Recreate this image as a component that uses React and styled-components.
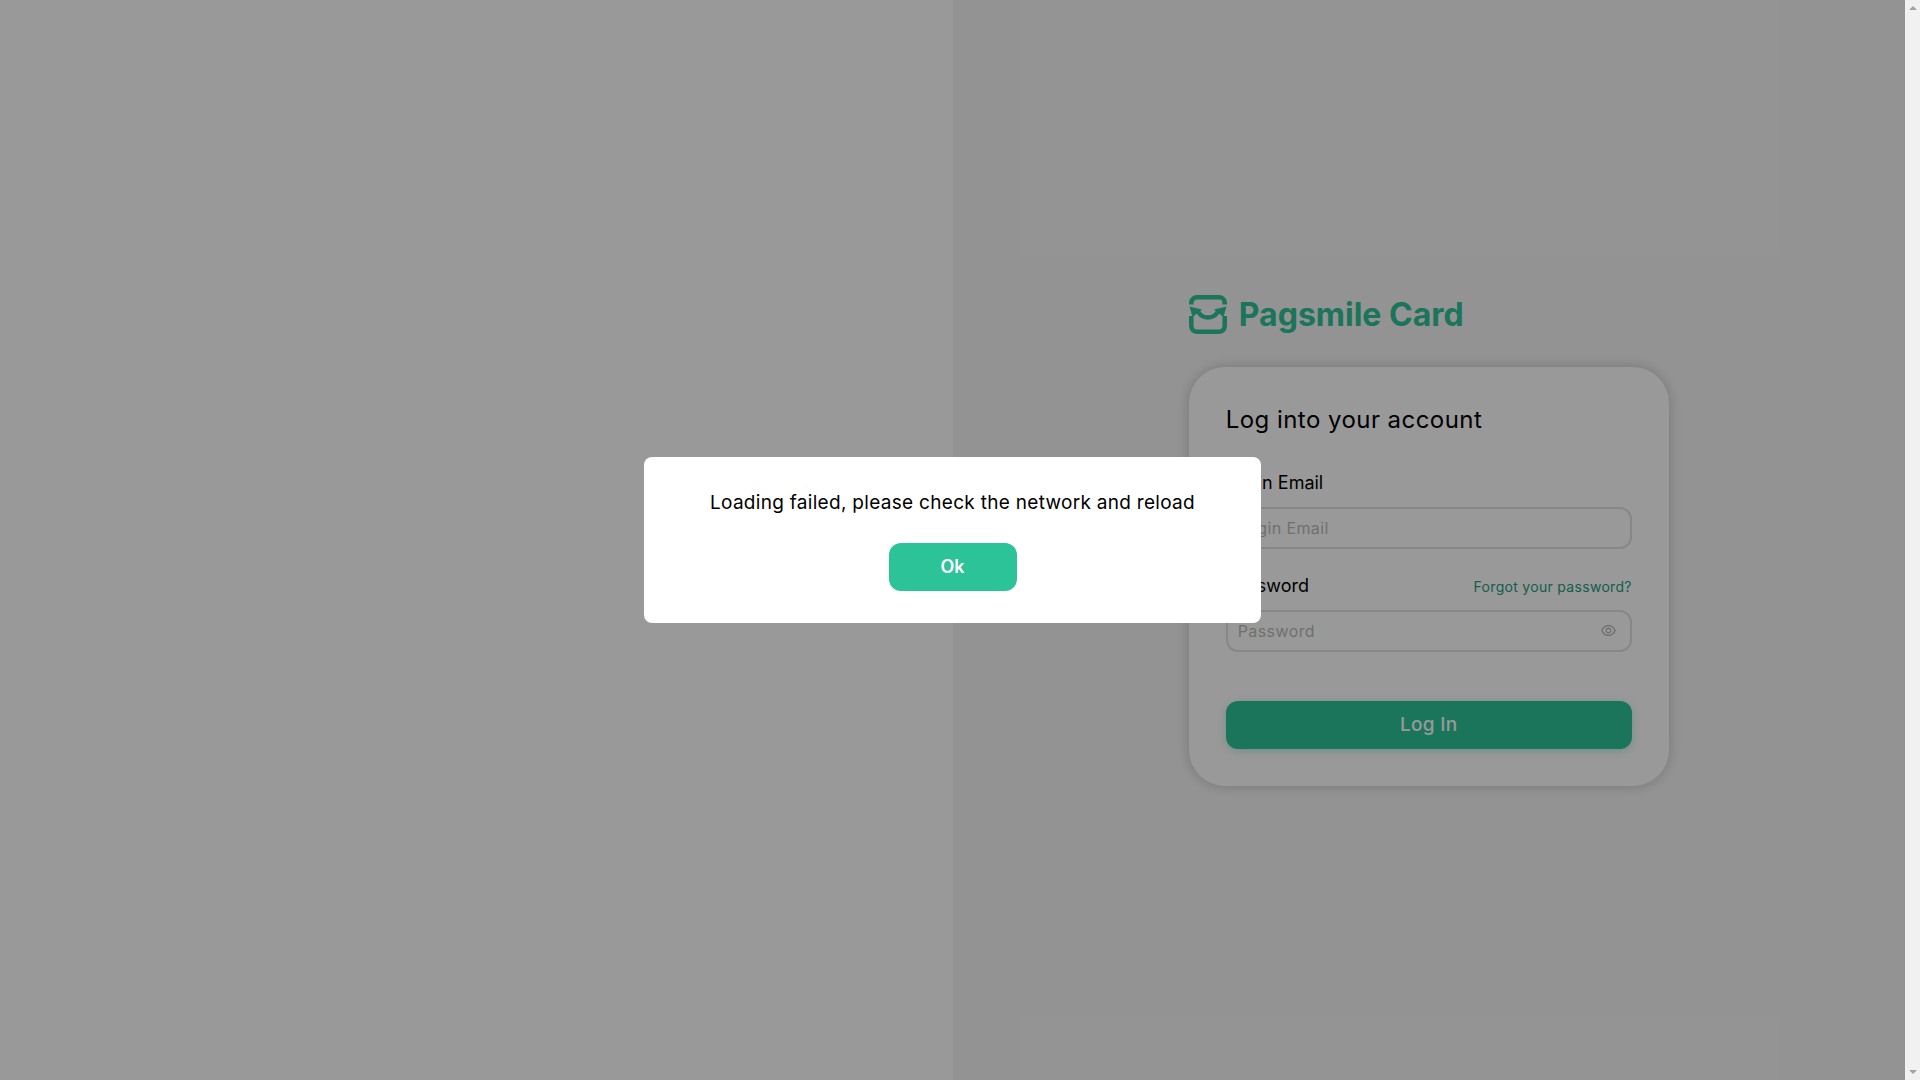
import React from 'react'
import styled, { createGlobalStyle } from 'styled-components'
import { AiOutlineEye } from 'react-icons/ai'

const Global = createGlobalStyle`
body{
  margin: 0;
  font-family: Inter, "Liberation Sans", sans-serif;
  color: #000;
}
*{
  box-sizing: border-box;
}
`

function Logo() {
  return (
    <LogoMark viewBox="0 0 38 39" fill="none">
      <path d="M2.3 9.5V8a5.7 5.7 0 0 1 5.7-5.7h22A5.7 5.7 0 0 1 35.7 8v1.5" stroke="#2cc398" strokeWidth="4.6" />
      <path d="M2.3 21v10a5.7 5.7 0 0 0 5.7 5.7h22a5.7 5.7 0 0 0 5.7-5.7V21" stroke="#2cc398" strokeWidth="4.6" />
      <path d="M8 14.5C10 19.5 14 22.5 19 22.5S28 19.5 30 14.5" stroke="#2cc398" strokeWidth="4.6" />
      <path d="M0.5 11.5L13 14.5L3.5 22Z M37.5 11.5L25 14.5L34.5 22Z" fill="#2cc398" />
    </LogoMark>
  )
}

function App() {
  return (
    <>
      <Global />
      <Shell>
        <Viewport>
          <LeftPane />
          <RightPane>
            <FormWrap>
              <Brand>
                <Logo />
                <BrandName>Pagsmile Card</BrandName>
              </Brand>
              <Card>
                <Heading>Log into your account</Heading>
                <Field>
                  <FieldHead>
                    <Label>Login Email</Label>
                  </FieldHead>
                  <InputBox>
                    <Input placeholder="Login Email" />
                  </InputBox>
                </Field>
                <Field>
                  <FieldHead>
                    <Label>Password</Label>
                    <Forgot href="#">Forgot your password?</Forgot>
                  </FieldHead>
                  <InputBox>
                    <Input placeholder="Password" />
                    <AiOutlineEye size={17} color="#b5b5b5" />
                  </InputBox>
                </Field>
                <LoginButton>Log In</LoginButton>
              </Card>
            </FormWrap>
          </RightPane>
          <Mask>
            <Dialog>
              <DialogText>Loading failed, please check the network and reload</DialogText>
              <OkButton>Ok</OkButton>
            </Dialog>
          </Mask>
        </Viewport>
        <ScrollTrack>
          <ScrollArrow />
          <ScrollArrow $down />
        </ScrollTrack>
      </Shell>
    </>
  )
}
export default App

const Shell = styled.div`
width: 100%;
height: 100vh;
display: flex;
overflow: hidden;
`
const Viewport = styled.div`
flex: 1;
position: relative;
display: flex;
`
const ScrollTrack = styled.div`
width: 15px;
background: #f1f1f1;
display: flex;
flex-direction: column;
justify-content: space-between;
align-items: center;
padding: 6px 0;
`
const ScrollArrow = styled.div`
width: 0;
height: 0;
border-left: 4px solid transparent;
border-right: 4px solid transparent;
border-bottom: ${p => p.$down ? '0' : '4px solid #a3a3a3'};
border-top: ${p => p.$down ? '4px solid #a3a3a3' : '0'};
`
const LeftPane = styled.div`
width: 50%;
background: #fff;
`
const RightPane = styled.div`
width: 50%;
background: #f6f6f6;
display: flex;
justify-content: center;
align-items: center;
`
const FormWrap = styled.div`
width: 480px;
display: flex;
flex-direction: column;
gap: 33px;
`
const Brand = styled.div`
display: flex;
align-items: center;
gap: 12px;
height: 39px;
`
const LogoMark = styled.svg`
width: 38px;
height: 39px;
`
const BrandName = styled.div`
font-size: 32px;
font-weight: 700;
color: #2cc398;
`
const Card = styled.div`
background: #fff;
border-radius: 36px;
padding: 37px;
height: 419px;
display: flex;
flex-direction: column;
box-shadow: 0 0 14px rgba(0,0,0,.2);
`
const Heading = styled.div`
font-size: 24px;
line-height: 32px;
letter-spacing: 0.45px;
margin-bottom: 35px;
`
const Field = styled.div`
margin-bottom: 25px;
`
const FieldHead = styled.div`
display: flex;
justify-content: space-between;
align-items: center;
height: 24px;
margin-bottom: 12px;
`
const Label = styled.span`
font-size: 18px;
`
const Forgot = styled.a`
font-size: 14px;
line-height: 24px;
padding-top: 2px;
color: #22a07c;
text-decoration: none;
letter-spacing: 0.3px;
`
const InputBox = styled.div`
height: 42px;
display: flex;
align-items: center;
padding: 0 13px 0 10px;
border: 2px solid #e2e2e2;
border-radius: 12px;
background: #fff;
`
const Input = styled.input`
flex: 1;
min-width: 0;
border: 0;
outline: 0;
padding: 0;
font-family: inherit;
font-size: 16px;
letter-spacing: 0.4px;
&::placeholder{
  color: #bbb;
}
`
const LoginButton = styled.button`
margin-top: 24px;
height: 48px;
border: 0;
border-radius: 12px;
background: #2cc398;
color: #fff;
font-family: inherit;
font-size: 19px;
font-weight: 500;
letter-spacing: 0.3px;
box-shadow: 0 2px 8px rgba(44,195,152,.3);
`
const Mask = styled.div`
position: absolute;
inset: 0;
background: rgba(0,0,0,.4);
display: flex;
justify-content: center;
align-items: center;
`
const Dialog = styled.div`
width: 617px;
height: 166px;
background: #fff;
border-radius: 8px;
display: flex;
flex-direction: column;
align-items: center;
padding-top: 32px;
`
const DialogText = styled.div`
font-size: 19px;
line-height: 28px;
letter-spacing: 0.3px;
margin-bottom: 26px;
`
const OkButton = styled.button`
width: 128px;
height: 48px;
padding: 0 0 2px;
border: 0;
border-radius: 12px;
background: #2cc398;
color: #fff;
font-family: inherit;
font-size: 18px;
font-weight: 600;
`
